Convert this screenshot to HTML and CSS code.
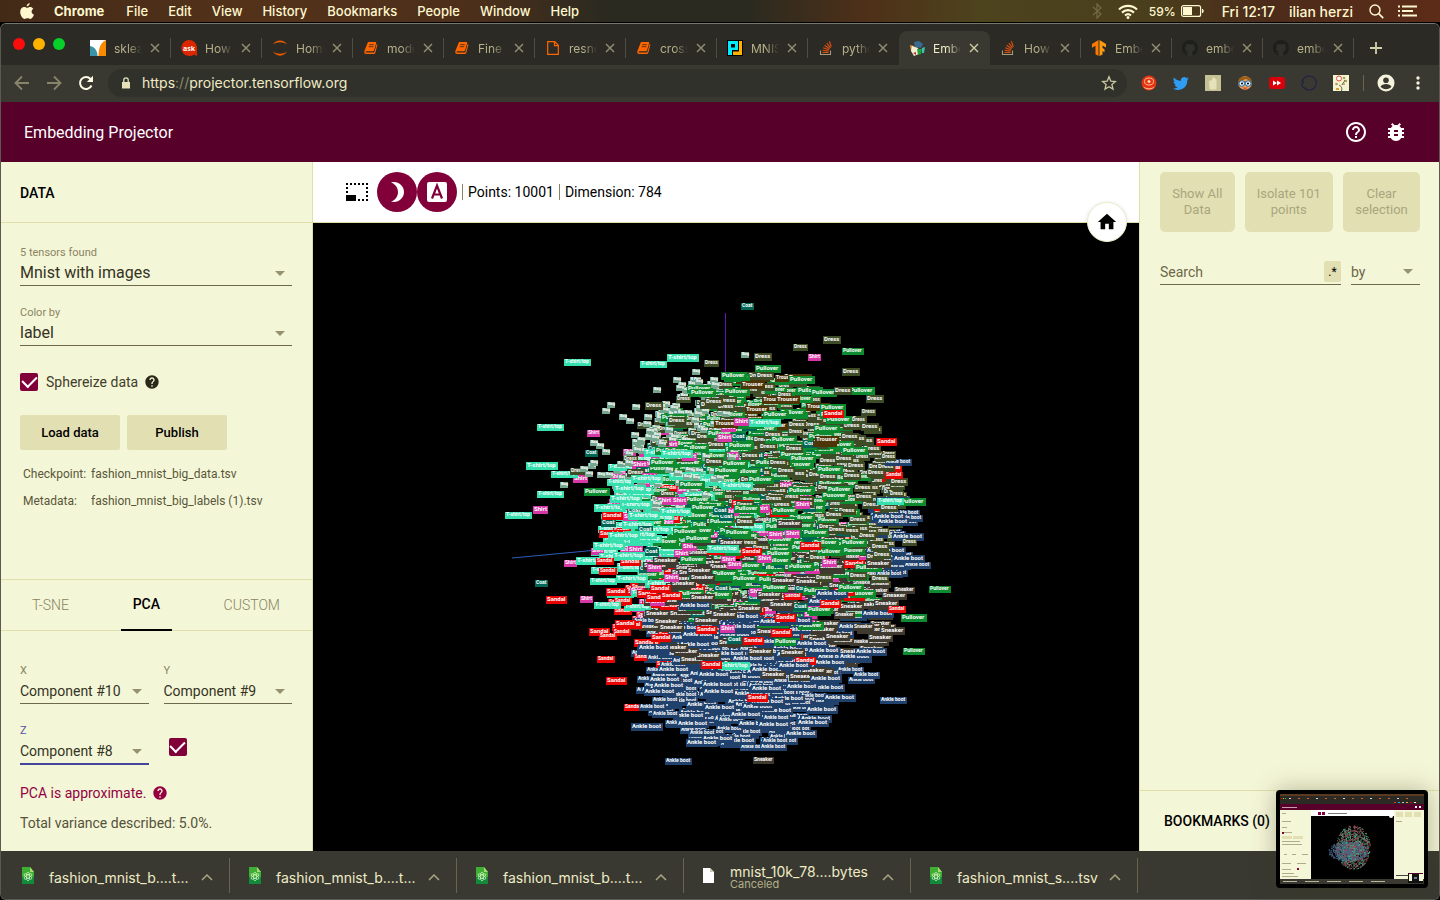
FILE: index.html
```html
<!DOCTYPE html>
<html lang="en">
<head>
<meta charset="utf-8">
<title>Embedding Projector</title>
<link rel="stylesheet" href="styles.css">
</head>
<body>
<svg class="defs" aria-hidden="true">
  <symbol id="i-x" viewBox="0 0 10 10"><path d="M1 1l8 8M9 1l-8 8" stroke="currentColor" stroke-width="1.4" fill="none"/></symbol>
  <symbol id="i-book" viewBox="0 0 16 16"><path d="M5 2h7.500q1 0 .7 1L11 10.500q-.3.800-1.200.8H3.300q-1 0-.7.8.2.500.8.5h7.200q.6 0 .8-.6L13.700 4l.8.6-2.200 8.200q-.3 1.200-1.500 1.200H3.200Q1 14 1.200 11.500z" fill="#f60"/><path d="M6.200 4.700h4.600M5.700 6.700h4.600" stroke="#2c2a25" stroke-width=".8" fill="none"/></symbol>
  <symbol id="i-so" viewBox="0 0 16 16"><path d="M2.500 10.500v4h10v-4" stroke="#a59c78" stroke-width="1.100" fill="none"/><path d="M4.500 12.500h6M4.600 10.300l6 .8M5.200 7.800l5.700 2M6.600 5.300l5 3.500M8.800 3.200l3.700 4.600M11.300 1.300l2 5.500" stroke="#e0500f" stroke-width="1.100"/></symbol>
  <symbol id="i-git" viewBox="0 0 16 16"><circle cx="8" cy="8" r="8" fill="#1e1e1c"/><path d="M5.500 16v-2.500c-2 .5-2.500-.8-3-1.500 1-.2 1.600 1.300 3 .7l.5-1C3.500 11.300 3 9.500 3.200 7.500l.8-1.700-.2-2.300 2.100.9a8 8 0 0 1 4.200 0l2.100-.9-.1 2.300.8 1.700c.2 2-.4 3.800-3 4.200.6.700.6 1.500.6 4.300" fill="#30302b"/></symbol>
  <symbol id="i-sheet" viewBox="0 0 14 17"><path d="M1 0h8l4 5v12H1z" fill="#3fae35"/><path d="M1 10h12v7H1z" fill="#138a3a"/><path d="M9 0v5h4z" fill="#a3dc70"/><g fill="none" stroke="#d9f4c0" stroke-width=".7"><ellipse cx="7" cy="9.500" rx="1.600" ry="4.500"/><ellipse cx="7" cy="9.500" rx="1.600" ry="4.500" transform="rotate(60 7 9.500)"/><ellipse cx="7" cy="9.500" rx="1.600" ry="4.500" transform="rotate(120 7 9.500)"/></g></symbol>
  <symbol id="i-up" viewBox="0 0 12 8"><path d="M1 7l5-5 5 5" stroke="#a9a683" stroke-width="1.500" fill="none"/></symbol>
  <symbol id="i-help" viewBox="0 0 24 24"><path fill="currentColor" d="M12 2C6.480 2 2 6.480 2 12s4.480 10 10 10 10-4.480 10-10S17.520 2 12 2zm1 17h-2v-2h2v2zm2.070-7.750l-.9.920C13.450 12.900 13 13.500 13 15h-2v-.5c0-1.100.45-2.100 1.170-2.830l1.240-1.260c.37-.36.590-.86.590-1.410 0-1.100-.9-2-2-2s-2 .9-2 2H8c0-2.210 1.790-4 4-4s4 1.790 4 4c0 .88-.36 1.680-.93 2.250z"/></symbol>
</svg>

<header class="menubar">
  <svg class="apple" viewBox="0 0 14 17"><path fill="#fff8cf" d="M9.700 0c.1 1.700-1.300 3.400-3 3.400C6.500 1.800 8 .2 9.700 0zM10 4c.8 0 2.300.3 3.300 1.800-2.500 1.600-2.100 4.900.7 6-.8 2-2.100 4.200-3.600 4.200-1.100 0-1.500-.7-2.900-.7s-1.900.7-2.900.7C2.700 16 .2 12.300.2 9 .2 5.700 2.300 4 4.200 4c1.300 0 2.300.8 3.100.8S9 4 10 4z"/></svg>
  <nav class="menus"><b>Chrome</b><span>File</span><span>Edit</span><span>View</span><span>History</span><span>Bookmarks</span><span>People</span><span>Window</span><span>Help</span></nav>
  <div class="status">
    <svg class="bt" viewBox="0 0 10 16"><path d="M1 4l8 7-4 4V1l4 4-8 7" fill="none" stroke="#756b42" stroke-width="1.200"/></svg>
    <svg class="wifi" viewBox="0 0 20 15"><g fill="none" stroke="#fff8cf" stroke-width="2.200"><path d="M1 5.500a13 13 0 0 1 18 0"/><path d="M4 8.600a8.700 8.700 0 0 1 12 0"/><path d="M7 11.500a4.500 4.500 0 0 1 6 0"/></g><circle cx="10" cy="13.500" r="1.500" fill="#fff8cf"/></svg>
    <span class="pct">59%</span>
    <svg class="battery" viewBox="0 0 24 12"><rect x=".6" y=".6" width="19" height="10.800" rx="2" fill="none" stroke="#fff8cf" stroke-width="1.200"/><rect x="2" y="2" width="9" height="8" fill="#fff8cf"/><path d="M21.500 4v4q1.500-2 0-4" fill="#fff8cf" stroke="#fff8cf"/></svg>
    <span class="clock">Fri 12:17</span><span class="user">ilian herzi</span>
    <svg class="find" viewBox="0 0 15 15"><circle cx="6" cy="6" r="5" fill="none" stroke="#fff8cf" stroke-width="1.400"/><path d="M9.700 9.700l4.500 4.500" stroke="#fff8cf" stroke-width="1.700"/></svg>
    <svg class="list" viewBox="0 0 20 12"><path d="M0 1.500h2M0 6h2M0 10.500h2M4 1.500h15M4 6h11M4 10.500h15" stroke="#fff8cf" stroke-width="1.800"/></svg>
  </div>
</header>

<div class="browser">
  <div class="tabstrip">
    <div class="lights"><i class="red"></i><i class="yellow"></i><i class="green"></i></div>
    <div class="tab"><svg viewBox="0 0 16 16"><path fill="#fff" d="M0 0h16v16H0z"/><path fill="#f98a00" d="M16 0v16H8.500C8.500 9 10 3 16 0z"/><path fill="#3a93a8" d="M0 6c5 1 7.500 5 7.500 10H0z"/></svg><span>sklearn</span><button aria-label="Close tab"><svg><use href="#i-x"/></svg></button></div>
    <div class="tab"><svg viewBox="0 0 16 16"><path fill="#dc2600" d="M8 0a8 8 0 0 1 8 8v8l-3-1.500A8 8 0 1 1 8 0z"/><text x="2" y="11" class="ask">ask</text></svg><span>How to</span><button aria-label="Close tab"><svg><use href="#i-x"/></svg></button></div>
    <div class="tab"><svg viewBox="0 0 16 16"><path fill="#f05a00" d="M1 4.500C4-1 12-1 15 4.500 11 1.500 5 1.500 1 4.500zM1 11.500c3 5.500 11 5.500 14 0-4 3-10 3-14 0z"/></svg><span>Home</span><button aria-label="Close tab"><svg><use href="#i-x"/></svg></button></div>
    <div class="tab"><svg><use href="#i-book"/></svg><span>models</span><button aria-label="Close tab"><svg><use href="#i-x"/></svg></button></div>
    <div class="tab"><svg><use href="#i-book"/></svg><span>Fine</span><button aria-label="Close tab"><svg><use href="#i-x"/></svg></button></div>
    <div class="tab"><svg viewBox="0 0 16 16"><path d="M2.700 1.700h7l3.600 3.600v9H2.700zM9.500 1.700v4h3.800" fill="none" stroke="#f60" stroke-width="1.200"/></svg><span>resnet</span><button aria-label="Close tab"><svg><use href="#i-x"/></svg></button></div>
    <div class="tab"><svg><use href="#i-book"/></svg><span>cross</span><button aria-label="Close tab"><svg><use href="#i-x"/></svg></button></div>
    <div class="tab"><svg viewBox="0 0 16 16"><path d="M0 0h16v16H0z"/><path fill="#00eaff" d="M1 1h10v9H5v5H1z"/><path d="M4 4h4v3.500H4z"/><path fill="#ffb300" d="M12 1h3v14H6v-3.500h6z"/></svg><span>MNIST</span><button aria-label="Close tab"><svg><use href="#i-x"/></svg></button></div>
    <div class="tab last"><svg><use href="#i-so"/></svg><span>python</span><button aria-label="Close tab"><svg><use href="#i-x"/></svg></button></div>
    <div class="tab active"><svg viewBox="0 0 16 16"><path fill="#3a6a90" d="M5 2l5-1 4 3-2 4-6-1z"/><path fill="#d8923a" d="M1 5l4 1 1 7-4-2z"/><path fill="#f1ecd2" d="M3 6l6 2 1 6-5 2-3-5z"/><path fill="#1fa23f" d="M8 9h5l-1 5-3 1z"/><path fill="#3cc0b0" d="M13 8l3-1-1 6h-2z"/><path fill="#b03a34" d="M4 13l3-1v3z"/></svg><span>Embedding</span><button aria-label="Close tab"><svg><use href="#i-x"/></svg></button></div>
    <div class="tab"><svg><use href="#i-so"/></svg><span>How to</span><button aria-label="Close tab"><svg><use href="#i-x"/></svg></button></div>
    <div class="tab"><svg viewBox="0 0 16 16"><path fill="#ff7a00" d="M7.500 0v16l-3-1.700V5.800L1 7.700V4z"/><path fill="#ff9c10" d="M8.500 0L15 4v3.500l-3.500-2V8l2 1.200v3L11.500 11v3.500l-3 1.500z"/></svg><span>Embed</span><button aria-label="Close tab"><svg><use href="#i-x"/></svg></button></div>
    <div class="tab"><svg><use href="#i-git"/></svg><span>embed</span><button aria-label="Close tab"><svg><use href="#i-x"/></svg></button></div>
    <div class="tab"><svg><use href="#i-git"/></svg><span>embed</span><button aria-label="Close tab"><svg><use href="#i-x"/></svg></button></div>
    <button class="newtab" aria-label="New tab"><svg viewBox="0 0 12 12"><path d="M6 0v12M0 6h12" stroke="#d2cfa9" stroke-width="1.800"/></svg></button>
  </div>

  <div class="toolbar">
    <button class="dim" aria-label="Back"><svg viewBox="0 0 16 16"><path d="M15 8H2M8 1.500L1.500 8 8 14.500" fill="none" stroke="currentColor" stroke-width="1.800"/></svg></button>
    <button class="dim" aria-label="Forward"><svg viewBox="0 0 16 16"><path d="M1 8h13M8 1.500L14.500 8 8 14.500" fill="none" stroke="currentColor" stroke-width="1.800"/></svg></button>
    <button aria-label="Reload"><svg viewBox="0 0 16 16"><path d="M13.500 10.500A6 6 0 1 1 12.500 4" fill="none" stroke="currentColor" stroke-width="2"/><path d="M15 .8V7H8.800z" fill="currentColor"/></svg></button>
    <div class="omnibox">
      <svg class="lock" viewBox="0 0 10 12"><path d="M1 5h8v6.500H1z" fill="#e3e0ba"/><path d="M2.800 5V3a2.200 2.200 0 0 1 4.400 0v2" fill="none" stroke="#e3e0ba" stroke-width="1.300"/></svg>
      <span>https<em>://</em>projector.tensorflow.org</span>
      <svg class="star" viewBox="0 0 16 16"><path d="M8 1.800l1.800 4.300 4.700.4-3.600 3 1.100 4.600L8 11.700l-4 2.400 1.100-4.600-3.600-3 4.700-.4z" fill="none" stroke="#c9c6a0" stroke-width="1.300"/></svg>
    </div>
    <div class="exts">
      <svg viewBox="0 0 16 16"><circle cx="8" cy="8" r="7.500" fill="#e33312"/><path d="M2 11.500a7.500 7.500 0 0 0 12 0q-6 3.500-12 0z" fill="#f5b080"/><ellipse cx="8" cy="6.500" rx="4.500" ry="3.500" fill="none" stroke="#ffb890"/><circle cx="8" cy="6.500" r="1.500" fill="#ffd8a8"/></svg>
      <svg viewBox="0 0 16 16"><path fill="#2f9cf4" d="M16 3.200a6 6 0 0 1-1.700 1.700C14.600 11 10 15 5 15a9 9 0 0 1-5-1.500c1.700.2 3.400-.3 4.700-1.300a3.300 3.300 0 0 1-3-2.300h1.400A3.300 3.300 0 0 1 .6 6.600l1.400.4A3.300 3.300 0 0 1 1 2.600a9.300 9.300 0 0 0 6.800 3.400A3.300 3.300 0 0 1 13.300 3l2.100-.8-1.400 1.800z"/></svg>
      <svg viewBox="0 0 16 16"><path fill="#c4c196" d="M0 0h16v16H0z"/><path fill="#e4e1bb" d="M4 6l3-1 1-3 3.500 2.500V14q-3.500 1.500-7 0z"/></svg>
      <svg viewBox="0 0 16 16"><circle cx="8" cy="8" r="6.800" fill="#eda060"/><path fill="#9b5d13" d="M1 7C1 0 15 0 15 7L9 4z"/><path d="M1 7h14" stroke="#5d3814"/><circle cx="4.800" cy="8.500" r="2.800" fill="#d8f2ff" stroke="#216aa4"/><circle cx="11.200" cy="8.500" r="2.800" fill="#d8f2ff" stroke="#216aa4"/><circle cx="5" cy="8.500" r="1"/><circle cx="11" cy="8.500" r="1"/><path fill="#d8552a" d="M5 12.500h6L8 15z"/></svg>
      <svg viewBox="0 0 16 16"><rect y="2" width="16" height="12" rx="3" fill="#d9000b"/><path fill="#fff" d="M4 5.500L8 8l-4 2.500zM8 5.500L12 8l-4 2.500z"/></svg>
      <svg viewBox="0 0 16 16"><path d="M3 3.500A7 7 0 1 1 4 13.500L1 11V8.500L2.500 7 1 5.500z" fill="none" stroke="#1f1f4a" stroke-width="1.100"/></svg>
      <svg viewBox="0 0 16 16"><path fill="#f6f3d0" d="M0 0h16v16H0z"/><path d="M8.500 16c1-4-1-5-2.500-6M9 10c.5-2 2-2 3-5" stroke="#565231" fill="none"/><g fill="#a9a05a"><circle cx="11" cy="3" r="1.300"/><circle cx="13" cy="6" r="1.200"/><circle cx="3.500" cy="9" r="1.300"/><circle cx="11" cy="9" r="1"/></g><circle cx="6" cy="3.500" r="2.500" fill="#fff" stroke="#e64b2c"/><path d="M3 14h3" stroke="#d7a329" stroke-width="2"/></svg>
    </div>
    <i class="sep"></i>
    <svg class="avatar" viewBox="0 0 18 18"><circle cx="9" cy="9" r="8.500" fill="#f6f3dc"/><circle cx="9" cy="6.300" r="2.800" fill="#393932"/><path fill="#393932" d="M3.500 12.600c2-3.500 9-3.500 11 0-2.500 3.600-8.500 3.600-11 0z"/></svg>
    <svg class="dots" viewBox="0 0 4 14"><g fill="#f6f3dc"><circle cx="2" cy="2" r="1.700"/><circle cx="2" cy="7" r="1.700"/><circle cx="2" cy="12" r="1.700"/></g></svg>
  </div>

  <div class="appbar">
    <h1>Embedding Projector</h1>
    <button aria-label="Help"><svg viewBox="0 0 24 24"><path fill="#fff" d="M11 18h2v-2h-2v2zm1-16C6.480 2 2 6.480 2 12s4.480 10 10 10 10-4.480 10-10S17.520 2 12 2zm0 18c-4.410 0-8-3.590-8-8s3.590-8 8-8 8 3.590 8 8-3.590 8-8 8zm0-14c-2.210 0-4 1.790-4 4h2c0-1.100.9-2 2-2s2 .9 2 2c0 2-3 1.750-3 5h2c0-2.250 3-2.500 3-5 0-2.210-1.790-4-4-4z"/></svg></button>
    <button aria-label="Report a bug"><svg viewBox="0 0 24 24"><path fill="#fff" d="M20 8h-2.810c-.45-.78-1.070-1.450-1.820-1.960L17 4.410 15.590 3l-2.170 2.170C12.960 5.060 12.490 5 12 5c-.49 0-.96.060-1.410.17L8.410 3 7 4.410l1.620 1.630C7.880 6.550 7.260 7.220 6.810 8H4v2h2.090c-.05.33-.09.66-.09 1v1H4v2h2v1c0 .34.040.67.090 1H4v2h2.810c1.040 1.790 2.970 3 5.190 3s4.150-1.210 5.190-3H20v-2h-2.090c.05-.33.090-.66.090-1v-1h2v-2h-2v-1c0-.34-.04-.67-.09-1H20V8zm-6 8h-4v-2h4v2zm0-4h-4v-2h4v2z"/></svg></button>
  </div>

  <main class="app">
    <aside class="left">
      <h2>DATA</h2>
      <section class="data">
        <div class="field big"><label for="tensor">5 tensors found</label><select id="tensor"><option>Mnist with images</option></select></div>
        <div class="field big"><label for="color">Color by</label><select id="color"><option>label</option></select></div>
        <div class="check"><input type="checkbox" id="sphere" checked><label for="sphere">Sphereize data</label><svg class="help"><use href="#i-help"/></svg></div>
        <div class="actions"><button>Load data</button><button>Publish</button></div>
        <dl><dt>Checkpoint:</dt><dd>fashion_mnist_big_data.tsv</dd><dt>Metadata:</dt><dd>fashion_mnist_big_labels (1).tsv</dd></dl>
      </section>
      <div class="modes"><button>T-SNE</button><button class="on">PCA</button><button>CUSTOM</button></div>
      <section class="pca">
        <div class="grid">
          <div class="field"><label for="cx">X</label><select id="cx"><option>Component #10</option></select></div>
          <div class="field"><label for="cy">Y</label><select id="cy"><option>Component #9</option></select></div>
          <div class="field focus"><label for="cz">Z</label><select id="cz"><option>Component #8</option></select></div>
          <input type="checkbox" aria-label="Use Z component" checked>
        </div>
        <p class="warn">PCA is approximate. <svg class="help"><use href="#i-help"/></svg></p>
        <p>Total variance described: 5.0%.</p>
      </section>
    </aside>

    <section class="center">
      <div class="tools">
        <button aria-label="Select area"><svg viewBox="0 0 24 20"><g fill="none" stroke="#000" stroke-width="2"><path d="M1 2h22" stroke-dasharray="2 2"/><path d="M2 5v7" stroke-dasharray="2 2"/><path d="M22 5v14" stroke-dasharray="2 2"/><path d="M13 18h7" stroke-dasharray="2 2"/></g><path d="M1 13h10v6H1z"/></svg></button>
        <button class="round" aria-label="Night mode"><svg viewBox="0 0 24 24"><path fill="#fff" d="M9 2c-1.050 0-2.050.16-3 .46 4.060 1.270 7 5.060 7 9.540s-2.940 8.270-7 9.540c.95.3 1.950.46 3 .46 5.520 0 10-4.480 10-10S14.520 2 9 2z"/></svg></button>
        <button class="round" aria-label="3D labels mode"><svg viewBox="0 0 24 24"><rect x="2" y="2" width="20" height="20" rx="2" fill="#fff"/><path d="M7 18.500L12 5.500l5 13M8.700 14.500h6.600" fill="none" stroke="#820039" stroke-width="2.200"/></svg></button>
        <span>Points: 10001</span><span>Dimension: 784</span>
      </div>
      <svg class="scene" id="scene" viewBox="313 223 826 628"></svg>
      <button class="home" aria-label="Reset view"><svg viewBox="0 0 24 24"><path d="M10 20v-6h4v6h5v-8h3L12 3 2 12h3v8z"/></svg></button>
    </section>

    <aside class="right">
      <div class="sel"><button disabled>Show All<br>Data</button><button disabled>Isolate 101<br>points</button><button disabled>Clear<br>selection</button></div>
      <div class="search"><div class="query"><input type="text" placeholder="Search" aria-label="Search"><button aria-label="Regex mode">.*</button></div><select aria-label="Search by"><option>by</option></select></div>
      <div class="marks">BOOKMARKS (0)</div>
    </aside>
  </main>

  <footer class="downloads">
    <div class="dl"><svg class="file"><use href="#i-sheet"/></svg><span>fashion_mnist_b....t...</span><svg class="up"><use href="#i-up"/></svg></div>
    <div class="dl"><svg class="file"><use href="#i-sheet"/></svg><span>fashion_mnist_b....t...</span><svg class="up"><use href="#i-up"/></svg></div>
    <div class="dl"><svg class="file"><use href="#i-sheet"/></svg><span>fashion_mnist_b....t...</span><svg class="up"><use href="#i-up"/></svg></div>
    <div class="dl"><svg class="file" viewBox="0 0 14 17"><path fill="#fff" d="M1 1h7l4 4v11H1z"/><path fill="#c9c7b8" d="M8 1v4h4z"/></svg><span>mnist_10k_78....bytes<small>Canceled</small></span><svg class="up"><use href="#i-up"/></svg></div>
    <div class="dl"><svg class="file"><use href="#i-sheet"/></svg><span>fashion_mnist_s....tsv</span><svg class="up"><use href="#i-up"/></svg></div>
  </footer>
</div>

<div class="preview"><svg id="mini" viewBox="0 0 144 90"></svg></div>
<script src="scene.js"></script>
</body>
</html>
```
FILE: styles.css
```css
* { box-sizing: border-box; }
html, body { height: 100%; margin: 0; }
body { display: flex; flex-direction: column; background: #000; font-family: Roboto, "Liberation Sans", sans-serif; font-size: 14px; color: #3f3d2a; overflow: hidden; }
button, select, input { font: inherit; color: inherit; margin: 0; padding: 0; border: 0; background: none; }
svg { display: block; flex: none; }
.defs { position: absolute; width: 0; height: 0; }

.menubar { height: 23px; flex: none; display: flex; align-items: center; justify-content: space-between; padding: 0 22px 0 20px; color: #fff8cf; font-family: Inter, sans-serif; font-size: 13px; font-weight: 500; border-bottom: 1px solid #000; background: linear-gradient(90deg, #432a17, #54321a 18%, #4c2f1a 33%, #2b2a20 42%, #2b2a20 52%, #4e3018 60%, #4d431d 68%, #4a3e1c 80%, #4c2b1a 88%, #5c2c18); }
.apple { width: 14px; height: 17px; margin-right: 20px; }
.menus { display: flex; gap: 20px; flex: 1; }
.menus b { padding-right: 2px; }
.status { display: flex; align-items: center; font-size: 14px; }
.bt { width: 10px; height: 16px; margin-right: 16px; }
.wifi { width: 20px; height: 15px; margin-right: 11px; }
.pct { font-size: 12px; margin-right: 5px; }
.battery { width: 24px; height: 12px; margin-right: 17px; }
.clock { margin-right: 14px; }
.user { margin-right: 16px; }
.find { width: 15px; height: 15px; margin-right: 14px; }
.list { width: 20px; height: 12px; }

.browser { flex: 1; min-height: 0; display: flex; flex-direction: column; border: 1px solid #5a5a52; border-top-color: #77776c; border-radius: 6px; overflow: hidden; background: #2c2a25; }
.tabstrip { height: 41px; flex: none; display: flex; align-items: flex-end; background: #2c2a25; font-family: Inter, sans-serif; font-size: 12px; color: #b5b18a; }
.lights { display: flex; gap: 8px; width: 79px; padding: 0 0 15px 12px; }
.lights i { width: 12px; height: 12px; border-radius: 50%; }
.red { background: #fc0d0d; }
.yellow { background: #fcb300; }
.green { background: #06d029; }
.tab { width: 91px; height: 34px; flex: 0 1 91px; display: flex; align-items: center; padding-left: 10px; position: relative; }
.tab > svg { width: 16px; height: 16px; margin-right: 8px; }
.tab > span { width: 28px; overflow: hidden; white-space: nowrap; -webkit-mask-image: linear-gradient(90deg, #000 50%, transparent); mask-image: linear-gradient(90deg, #000 50%, transparent); }
.tab button { margin-left: 8px; color: #949071; }
.tab button svg { width: 10px; height: 10px; }
.tab:not(.active):not(.last)::after { content: ""; position: absolute; right: 0; top: 7px; width: 1px; height: 20px; background: #4e4d41; }
.tab.active { background: #393932; border-radius: 8px 8px 0 0; color: #efecc5; }
.tab.active button { color: #cfcca5; }
.ask { font: bold 7px "Open Sans", sans-serif; fill: #fff; }
.newtab { width: 44px; height: 34px; display: grid; place-items: center; }
.newtab svg { width: 12px; height: 12px; }

.toolbar { height: 37px; flex: none; display: flex; align-items: center; background: #393932; padding: 0 19px 2px 13px; color: #fffbe4; }
.toolbar button { width: 16px; height: 16px; margin-right: 16px; }
.toolbar button svg { width: 16px; height: 16px; }
.toolbar .dim { color: #88846a; }
.omnibox { flex: 1; height: 28px; margin-left: -2px; border-radius: 14px; background: #31312b; display: flex; align-items: center; padding: 0 10px 0 13px; color: #efecc5; font-family: Inter, sans-serif; font-size: 14px; }
.omnibox span { flex: 1; }
.omnibox em { font-style: normal; color: #8e8b6c; }
.lock { width: 10px; height: 12px; margin-right: 11px; }
.star { width: 16px; height: 16px; }
.exts { display: flex; gap: 16px; margin: 0 14px; }
.exts svg { width: 16px; height: 16px; }
.sep { width: 1px; height: 16px; background: #66644f; margin-right: 13px; }
.avatar { width: 18px; height: 18px; margin-right: 21px; }
.dots { width: 4px; height: 14px; }

.appbar { height: 60px; flex: none; display: flex; align-items: center; gap: 16px; background: #570029; padding: 0 31px 0 23px; }
.appbar h1 { flex: 1; margin: 0; font-size: 16px; font-weight: 400; color: #fff; }
.appbar svg { width: 24px; height: 24px; }

.app { flex: 1; min-height: 0; display: flex; background: #f4f6d8; }
.left { width: 312px; flex: none; display: flex; flex-direction: column; border-right: 1px solid #dfdfa9; }
.left h2 { height: 61px; margin: 0; padding: 0 19px; line-height: 62px; font-size: 14px; font-weight: 500; color: #000; border-bottom: 1px solid #dfdfa9; }
.data { flex: 1; padding: 22px 20px 0 19px; }
.field { display: flex; flex-direction: column; }
.field label { font-size: 11px; line-height: 16px; color: #8a8561; }
select { appearance: none; border-radius: 0; border-bottom: 1px solid #6c694c; background: url("data:image/svg+xml,%3Csvg xmlns='http://www.w3.org/2000/svg' width='10' height='5'%3E%3Cpath d='M0 0h10L5 5z' fill='%2396916f'/%3E%3C/svg%3E") no-repeat right 7px center; }
.field select { height: 25px; line-height: 24px; color: #35331f; }
.big { margin-bottom: 19px; }
.big select { font-size: 16px; }
input[type=checkbox] { appearance: none; width: 18px; height: 18px; border-radius: 2px; background: #820039; display: grid; place-items: center; }
input[type=checkbox]::after { content: ""; width: 7px; height: 12px; border: solid #fff; border-width: 0 2px 2px 0; transform: translateY(-2px) rotate(45deg); }
.check { display: flex; align-items: center; margin-top: 27px; height: 18px; }
.check label { margin: 0 6px 0 8px; }
.help { width: 16px; height: 16px; }
.check .help { color: #2a2818; }
.actions { display: flex; gap: 7px; margin-top: 24px; }
.actions button { width: 100px; height: 35px; border-radius: 2px; background: #e2dfb3; color: #000; font-size: 13px; font-weight: 500; }
dl { display: grid; grid-template-columns: 68px 1fr; margin: 11px 0 0 3px; font-size: 12px; line-height: 27px; color: #5a5638; }
dd { margin: 0; }
.modes { height: 52px; flex: none; display: flex; justify-content: space-between; padding: 0 20px 0 19px; border: solid #dfdfa9; border-width: 1px 0; }
.modes button { padding: 0 12px 2px; height: 51px; color: #88845f; font-weight: 300; }
.modes .on { color: #000; font-weight: 500; border-bottom: 2px solid #000; }
.pca { flex: none; padding: 32px 20px 19px 19px; }
.grid { display: grid; grid-template-columns: 1fr 1fr; column-gap: 15px; row-gap: 19px; }
.grid input { margin: 15px 0 0 5px; }
.focus label { color: #5852a0; }
.focus select { border-bottom: 2px solid #45459b; height: 26px; }
.pca p { display: flex; align-items: center; gap: 6px; margin: 0; line-height: 18px; color: #55523a; }
.pca .warn { color: #940042; margin: 19px 0 12px; }

.center { flex: 1; min-width: 0; display: flex; flex-direction: column; position: relative; background: #000; }
.tools { height: 61px; flex: none; display: flex; align-items: center; background: #fff; border-bottom: 1px solid #dfdfa9; padding-left: 32px; color: #000; }
.tools button svg { width: 24px; height: 20px; }
.tools button:first-child { margin-right: 8px; }
.tools .round { width: 40px; height: 40px; border-radius: 50%; background: #820039; display: grid; place-items: center; }
.tools .round svg { width: 24px; height: 24px; }
.tools span { border-left: 1px solid #8a8561; padding-left: 5px; margin-left: 5px; line-height: 16px; }
.scene { flex: 1; min-height: 0; width: 100%; font-family: Roboto, sans-serif; font-weight: 700; }
.home { position: absolute; right: 12px; top: 40px; width: 40px; height: 40px; border-radius: 50%; background: #fff; border: 1px solid #eceecb; display: grid; place-items: center; box-shadow: 0 1px 4px rgba(0, 0, 0, .15); }
.home svg { width: 22px; height: 22px; }

.right { width: 300px; flex: none; display: flex; flex-direction: column; border-left: 1px solid #dfdfa9; }
.sel { display: flex; gap: 10px; padding: 10px 19px 0 20px; }
.sel button { flex: 1 1 auto; height: 60px; padding: 0 10px; border-radius: 5px; background: #e2dfb3; color: #aaa67c; font-size: 13px; line-height: 16px; white-space: nowrap; }
.search { display: flex; gap: 10px; margin: 27px 19px 0 20px; }
.query { flex: 1; min-width: 0; display: flex; height: 26px; border-bottom: 1px solid #6c694c; }
.query input { flex: 1; min-width: 0; outline: 0; }
.query input::placeholder { color: #6d6848; opacity: 1; }
.query button { width: 17px; height: 21px; margin-top: 2px; border-radius: 2px; background: #e2dfb3; color: #000; font-size: 12px; }
.search select { width: 69px; height: 26px; color: #6d6848; }
.marks { margin-top: auto; height: 61px; line-height: 60px; border-top: 1px solid #dfdfa9; padding-left: 24px; color: #000; font-weight: 500; }

.downloads { height: 48px; flex: none; display: flex; padding-left: 1px; background: #393932; color: #efecc5; font-family: Inter, sans-serif; font-size: 14px; }
.dl { width: 227px; display: flex; align-items: center; padding: 4px 16px 0 19px; position: relative; }
.dl::after { content: ""; position: absolute; right: -1px; top: 7px; width: 1px; height: 35px; background: #66644f; }
.file { width: 14px; height: 17px; margin: 0 14px 4px 0; }
.dl span { flex: 1; line-height: 15px; white-space: nowrap; }
.dl small { display: block; font-size: 11px; line-height: 11px; color: #b3b08a; }
.up { width: 12px; height: 8px; }

.preview { position: absolute; right: 12px; bottom: 12px; width: 152px; height: 98px; padding: 4px; border-radius: 4px; background: #000; box-shadow: 0 0 24px rgba(60, 60, 20, .35); }
.preview svg { width: 144px; height: 90px; }
```
FILE: scene.js
```js
const NS = "http://www.w3.org/2000/svg";

function add(parent, name, attrs, text) {
  const el = document.createElementNS(NS, name);
  for (const k in attrs) el.setAttribute(k, attrs[k]);
  if (text) el.textContent = text;
  parent.appendChild(el);
}

// Small seeded generator, so that the cloud is the same on every load.
let seed = 4217;
function rnd() {
  seed = (seed * 1664525 + 1013904223) >>> 0;
  return seed / 4294967296;
}

// label: [text, colour, width in em]
const KINDS = {
  B: ["Bag", "#76a78e", 1.8],
  T: ["T-shirt/top", "#35dfae", 5.1],
  P: ["Pullover", "#0d8b30", 4.1],
  D: ["Dress", "#3e4b27", 2.8],
  C: ["Coat", "#006655", 2.3],
  S: ["Shirt", "#d636a6", 2.4],
  R: ["Sandal", "#e90202", 3.3],
  N: ["Sneaker", "#3e3a30", 4],
  A: ["Ankle boot", "#20416b", 5.1],
  O: ["Trouser", "#4e3508", 3.9]
};

// kind, centre x, centre y, radius x, radius y, count
const CLUSTERS = [
  ["B", 665, 440, 75, 72, 420], ["T", 638, 535, 45, 80, 60], ["T", 690, 495, 70, 60, 70],
  ["P", 755, 480, 105, 115, 330], ["P", 700, 530, 70, 90, 100], ["P", 790, 570, 95, 75, 120],
  ["D", 790, 460, 110, 105, 330], ["D", 830, 500, 70, 90, 130], ["D", 690, 460, 60, 70, 50],
  ["C", 730, 530, 125, 115, 110], ["S", 705, 530, 115, 110, 160], ["S", 780, 560, 90, 70, 40],
  ["R", 650, 580, 52, 100, 60], ["R", 730, 580, 125, 100, 60],
  ["R", 885, 470, 14, 50, 10], ["N", 770, 600, 130, 80, 300], ["N", 700, 610, 65, 55, 90],
  ["A", 740, 680, 90, 70, 300], ["A", 780, 640, 105, 80, 80], ["A", 890, 520, 25, 55, 32],
  ["A", 672, 650, 45, 50, 24], ["O", 775, 420, 75, 50, 26], ["D", 880, 520, 25, 60, 30]
];

// Labels that stand clear of the cloud: kind, left, top
const LONE = [
  ["C",741,303],["D",823,336],["D",793,344],["P",842,348],["D",754,353],["S",808,354],["B",741,352],["D",842,368],
  ["T",564,359],["T",640,361],["T",667,354],["D",704,360],["T",537,424],["T",526,462],["T",537,491],["T",505,512],
  ["S",533,506],["S",587,430],["C",585,450],["S",573,475],["T",551,471],["D",570,468],["P",584,488],["B",560,482],
  ["C",535,580],["R",546,596],["S",580,596],["S",564,560],["T",576,557],["R",596,558],["T",594,602],["R",589,628],
  ["R",599,633],["R",597,656],["R",606,677],["R",624,704],["A",639,704],["A",631,723],["A",665,758],["A",652,711],
  ["A",644,688],["N",753,757],["A",760,744],["A",785,730],["A",880,697],["A",853,672],["A",855,648],["P",903,648],
  ["P",929,586],["P",901,614],["R",888,606],["A",904,562],["A",893,555],["D",902,539],["D",861,409],["D",861,423],
  ["N",853,624],["N",894,587],["R",876,438],["R",885,472],["A",885,459],["P",900,498],["T",877,498],["D",881,454],
  ["B",673,377],["B",678,382],["B",676,385],["B",653,387],["B",692,369],["B",710,377],["B",711,382],["B",695,379],
  ["B",607,402],["B",602,408],["B",619,414],["B",632,404],["B",626,418],["B",590,440],["B",596,443],["B",602,449],
  ["B",585,471],["B",597,472],["B",580,466],["B",588,463],["B",590,460],["B",605,472],["B",660,407],["B",670,405],
  ["P",721,372],["O",741,381],["O",776,396],["D",756,372],["P",789,376],["P",690,389],["D",705,398],["O",714,420],
  ["S",734,418],["T",749,419],["R",823,410],["P",849,387],["D",834,387],["D",866,395],["D",645,402],
  ["D",668,417],["O",815,436],["T",661,450],["T",718,662],["R",701,661],["R",747,694],["R",743,637],["R",775,614],
  ["R",741,548],["R",800,542],["S",757,555],["A",816,590],["R",820,600],["P",838,584],["A",725,623],["S",720,625],
  ["A",824,694],["A",797,719],["A",686,739],["T",628,512],["T",610,495],["T",608,532],["R",606,588],["R",615,620]
];

function label(kind, x, y, near) {
  const [text, color, em] = KINDS[kind];
  const size = kind === "B" ? 4 : near ? 6 : 5;
  const g = document.getElementById("scene");
  add(g, "rect", { x: x, y: y, width: Math.round(em * size + 1), height: size + 2, fill: color });
  add(g, "text", { x: x + 1, y: y + size - 1, "font-size": size, fill: "#fff" }, text);
}

const scene = document.getElementById("scene");
add(scene, "path", { d: "M725.5 313V440", stroke: "#6412bd" });
add(scene, "path", { d: "M512 558L640 546", stroke: "#2d5db8" });

const cloud = [];
for (const [kind, cx, cy, rx, ry, n] of CLUSTERS) {
  const half = kind === "B" ? 3 : KINDS[kind][2] * 2.6;
  for (let i = 0; i < n; i++) {
    const a = rnd() * Math.PI * 2, r = Math.pow(rnd(), 0.6);
    const x = cx + Math.cos(a) * r * rx, y = cy + Math.sin(a) * r * ry;
    const ex = (x - 755) / 160, ey = (y - 560) / 192;
    if (ex * ex + ey * ey > 0.92 + rnd() * 0.14) continue;
    cloud.push([rnd(), kind, Math.round(x - half), Math.round(y - 3)]);
  }
}
cloud.sort((p, q) => p[0] - q[0]);
for (const [depth, kind, x, y] of cloud) label(kind, x, y, depth > 0.75);
LONE.forEach(([kind, x, y], i) => label(kind, x, y, i > 87 || i % 3 === 1));

// Thumbnail of the window in the corner.
const mini = document.getElementById("mini");
function box(x, y, width, height, fill) { add(mini, "rect", { x, y, width, height, fill }); }
box(0, 0, 144, 90, "#f4f6d8");
box(0, 0, 144, 2, "#5a3a20");
box(0, 2, 144, 9, "#2c2a25");
box(0, 10, 144, 6, "#570029");
for (let i = 0; i < 14; i++) box(9 + i * 9, 4, 2, 1, i % 3 ? "#e06010" : "#ddd");
for (let i = 0; i < 3; i++) box(1 + i * 2, 4, 1, 1, ["#f00", "#fb0", "#0c2"][i]);
for (let i = 0; i < 6; i++) box(114 + i * 4, 8, 2, 1, ["#e33", "#39f", "#cc9", "#da6", "#d00", "#eee"][i]);
box(2, 13, 15, 1, "#c9a0b0");
box(135, 12, 2, 2, "#fff"); box(139, 12, 2, 2, "#fff");
box(31, 16, 83, 6, "#fff");
box(38, 18, 3, 3, "#820039"); box(42, 18, 3, 3, "#820039"); box(48, 19, 19, 1, "#777");
box(31, 22, 83, 63, "#000");
add(mini, "circle", { cx: 111, cy: 22, r: 2, fill: "#fff" });
for (const [x, y, w] of [[2,19,4],[2,27,9],[2,33,5],[2,38,10],[2,47,18],[2,50,20],[4,60,3],[12,60,4],[22,60,6],[2,69,9],[17,69,9],[2,75,9],[2,79,12],[2,82,16],[116,27,6]]) box(x, y, w, 1, "#b0ac88");
box(2, 38, 2, 2, "#820039"); box(17, 74, 2, 2, "#820039");
box(2, 42, 10, 3, "#e2dfb3"); box(13, 42, 10, 3, "#e2dfb3");
for (let i = 0; i < 3; i++) box(116 + i * 9, 18, 7, 5, "#e2dfb3");
box(116, 81, 12, 1, "#444");
for (let i = 0; i < 1900; i++) {
  const a = rnd() * Math.PI * 2, r = Math.pow(rnd(), 0.7);
  const blue = i % 5 < 2;
  const x = (blue ? 68 : 73) + Math.cos(a) * r * (blue ? 20 : 17), y = (blue ? 57 : 53) + Math.sin(a) * r * (blue ? 10 : 22);
  box(x.toFixed(1), y.toFixed(1), 1, 1, blue ? "#4a6488" : ["#3fa070", "#5f7a5c", "#8b5860", "#2fbf90", "#a04a50"][i % 5]);
}
box(0, 85, 144, 5, "#393932");
for (let i = 0; i < 5; i++) box(3 + i * 22, 87, 14, 1, "#b9b795");
box(128, 79, 15, 10, "#111"); box(129, 80, 3, 7, "#f4f6d8"); box(129, 79, 14, 1, "#570029"); box(139, 80, 4, 7, "#f4f6d8"); box(134, 83, 3, 2, "#779");
```
